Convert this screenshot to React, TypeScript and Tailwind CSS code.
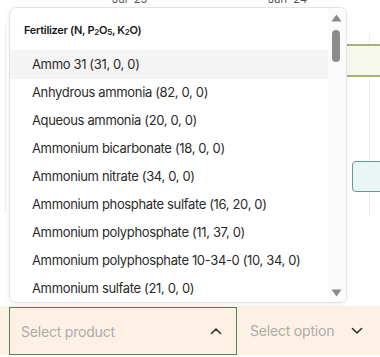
import React from "react";

const items = [
  "Ammo 31 (31, 0, 0)",
  "Anhydrous ammonia (82, 0, 0)",
  "Aqueous ammonia (20, 0, 0)",
  "Ammonium bicarbonate (18, 0, 0)",
  "Ammonium nitrate (34, 0, 0)",
  "Ammonium phosphate sulfate (16, 20, 0)",
  "Ammonium polyphosphate (11, 37, 0)",
  "Ammonium polyphosphate 10-34-0 (10, 34, 0)",
  "Ammonium sulfate (21, 0, 0)",
];

export default function App() {
  return (
    <div
      className="relative w-[380px] h-[357px] overflow-hidden bg-white text-[#222]"
      style={{ fontFamily: "Inter, 'Noto Sans', sans-serif" }}
    >
      {/* chart canvas behind */}
      <div className="relative h-[306px]">
        <div className="absolute left-[112px] top-[-9px] text-[11px] text-[#555]">Jul '23</div>
        <div className="absolute left-[268px] top-[-9px] text-[11px] text-[#555]">Jan '24</div>
        <div className="absolute left-[5px] top-[25px] h-[188px] w-px bg-[#efefef]" />
        <div className="absolute left-[369px] top-[34px] h-[182px] w-px bg-[#eeeee6]" />
        <div className="absolute left-[340px] top-[44px] h-[33px] w-[50px] border-y-2 border-[#a3b27a] bg-[#f7f9ee]" />
        <div className="absolute left-[352px] top-[161px] h-[31px] w-[40px] rounded-[4px] border border-[#5f9d94] bg-[#eaf5f5]" />
      </div>

      {/* bottom selects */}
      <div className="flex h-[49px] bg-[#fdf1e6]">
        <div className="ml-[9px] mt-px flex h-[48px] w-[228px] items-center justify-between border-[1.5px] border-[#4e874e] pl-[11px] pr-[14px]">
          <span className="text-[14px] tracking-[-0.2px] text-[#ababab]">Select product</span>
          <svg width="12" height="8" viewBox="0 0 12 8" fill="none">
            <path d="M1.5 6.5L6 2L10.5 6.5" stroke="#333" strokeWidth="1.6" strokeLinecap="round" strokeLinejoin="round" />
          </svg>
        </div>
        <div className="flex flex-1 items-center justify-between pl-[13px] pr-[17px]">
          <span className="text-[14px] tracking-[-0.2px] text-[#ababab]">Select option</span>
          <svg width="12" height="8" viewBox="0 0 12 8" fill="none">
            <path d="M1.5 1.5L6 6L10.5 1.5" stroke="#333" strokeWidth="1.6" strokeLinecap="round" strokeLinejoin="round" />
          </svg>
        </div>
      </div>

      {/* dropdown panel */}
      <div className="absolute left-[9px] top-[7px] flex h-[296px] w-[338px] overflow-hidden rounded-[7px] border border-[#e4e4e4] bg-white shadow-[0_2px_6px_rgba(0,0,0,0.06)]">
        <div className="flex flex-1 flex-col">
          <div className="flex h-[43px] shrink-0 items-center border-b border-[#efefef] pl-[14px] pt-[2px] text-[11px] font-semibold tracking-[-0.3px] text-[#1a1a1a]">
            Fertilizer (N, P<sub className="text-[8px] leading-none">2</sub>O<sub className="text-[8px] leading-none">5</sub>, K<sub className="text-[8px] leading-none">2</sub>O)
          </div>
          {items.map((t, i) => (
            <div
              key={t}
              className={`flex h-[28px] shrink-0 items-center pl-[22px] text-[13px] tracking-[-0.35px] text-[#2a2a2a] ${i === 0 ? "bg-[#f4f4f4]" : ""}`}
            >
              {t}
            </div>
          ))}
        </div>
        <div className="relative w-[18px] shrink-0 bg-[#fbfbfb]">
          <svg className="absolute left-[3px] top-[6px]" width="11" height="8" viewBox="0 0 11 8">
            <path d="M5.5 0.5L10.5 7.5H0.5Z" fill="#8a8a8a" />
          </svg>
          <div className="absolute left-[4px] top-[22px] h-[32px] w-[8px] rounded-full bg-[#8c8c8c]" />
          <svg className="absolute left-[3px] top-[281px]" width="11" height="8" viewBox="0 0 11 8">
            <path d="M0.5 0.5H10.5L5.5 7.5Z" fill="#8a8a8a" />
          </svg>
        </div>
      </div>
    </div>
  );
}
